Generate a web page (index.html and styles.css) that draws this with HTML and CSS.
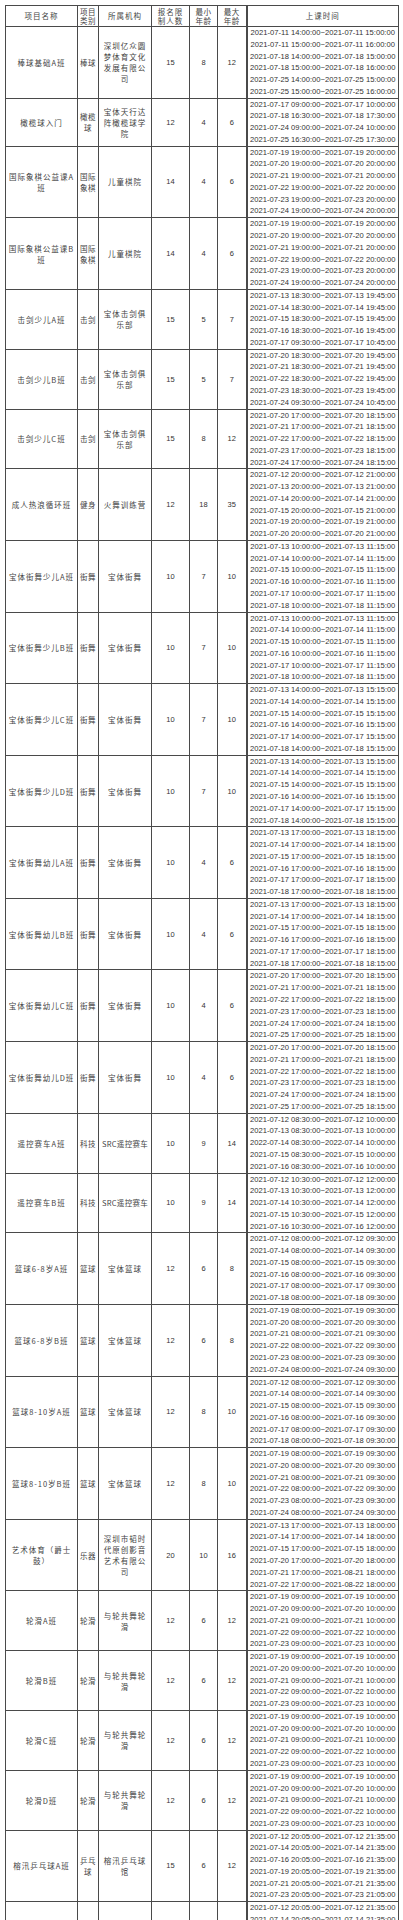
FILE: index.html
```html
<!DOCTYPE html>
<html lang="zh-CN">
<head>
<meta charset="utf-8">
<title>课程表</title>
<link rel="stylesheet" href="styles.css">
</head>
<body>
<div class="wrap">
<table class="tbl">
<colgroup>
<col class="c1"><col class="c2"><col class="c3"><col class="c4"><col class="c5"><col class="c6"><col class="c7">
</colgroup>
<thead>
<tr><th>项目名称</th><th class="narrow">项目<br>类别</th><th>所属机构</th><th>报名限<br>制人数</th><th class="narrow">最小<br>年龄</th><th class="narrow">最大<br>年龄</th><th class="t">上课时间</th></tr>
</thead>
<tbody>
<tr><td class="nm">棒球基础A班</td><td class="nm cat">棒球</td><td class="nm">深圳亿众圆<br>梦体育文化<br>发展有限公<br>司</td><td class="n">15</td><td class="n">8</td><td class="n">12</td><td class="t">
<div>2021-07-11 14:00:00~2021-07-11 15:00:00</div>
<div>2021-07-11 15:00:00~2021-07-11 16:00:00</div>
<div>2021-07-18 14:00:00~2021-07-18 15:00:00</div>
<div>2021-07-18 15:00:00~2021-07-18 16:00:00</div>
<div>2021-07-25 14:00:00~2021-07-25 15:00:00</div>
<div>2021-07-25 15:00:00~2021-07-25 16:00:00</div>
</td></tr>
<tr><td class="nm">橄榄球入门</td><td class="nm cat">橄榄<br>球</td><td class="nm">宝体天行达<br>阵橄榄球学<br>院</td><td class="n">12</td><td class="n">4</td><td class="n">6</td><td class="t">
<div>2021-07-17 09:00:00~2021-07-17 10:00:00</div>
<div>2021-07-18 16:30:00~2021-07-18 17:30:00</div>
<div>2021-07-24 09:00:00~2021-07-24 10:00:00</div>
<div>2021-07-25 16:30:00~2021-07-25 17:30:00</div>
</td></tr>
<tr><td class="nm">国际象棋公益课A<br>班</td><td class="nm cat">国际<br>象棋</td><td class="nm">儿童棋院</td><td class="n">14</td><td class="n">4</td><td class="n">6</td><td class="t">
<div>2021-07-19 19:00:00~2021-07-19 20:00:00</div>
<div>2021-07-20 19:00:00~2021-07-20 20:00:00</div>
<div>2021-07-21 19:00:00~2021-07-21 20:00:00</div>
<div>2021-07-22 19:00:00~2021-07-22 20:00:00</div>
<div>2021-07-23 19:00:00~2021-07-23 20:00:00</div>
<div>2021-07-24 19:00:00~2021-07-24 20:00:00</div>
</td></tr>
<tr><td class="nm">国际象棋公益课B<br>班</td><td class="nm cat">国际<br>象棋</td><td class="nm">儿童棋院</td><td class="n">14</td><td class="n">4</td><td class="n">6</td><td class="t">
<div>2021-07-19 19:00:00~2021-07-19 20:00:00</div>
<div>2021-07-20 19:00:00~2021-07-20 20:00:00</div>
<div>2021-07-21 19:00:00~2021-07-21 20:00:00</div>
<div>2021-07-22 19:00:00~2021-07-22 20:00:00</div>
<div>2021-07-23 19:00:00~2021-07-23 20:00:00</div>
<div>2021-07-24 19:00:00~2021-07-24 20:00:00</div>
</td></tr>
<tr><td class="nm">击剑少儿A班</td><td class="nm cat">击剑</td><td class="nm">宝体击剑俱<br>乐部</td><td class="n">15</td><td class="n">5</td><td class="n">7</td><td class="t">
<div>2021-07-13 18:30:00~2021-07-13 19:45:00</div>
<div>2021-07-14 18:30:00~2021-07-14 19:45:00</div>
<div>2021-07-15 18:30:00~2021-07-15 19:45:00</div>
<div>2021-07-16 18:30:00~2021-07-16 19:45:00</div>
<div>2021-07-17 09:30:00~2021-07-17 10:45:00</div>
</td></tr>
<tr><td class="nm">击剑少儿B班</td><td class="nm cat">击剑</td><td class="nm">宝体击剑俱<br>乐部</td><td class="n">15</td><td class="n">5</td><td class="n">7</td><td class="t">
<div>2021-07-20 18:30:00~2021-07-20 19:45:00</div>
<div>2021-07-21 18:30:00~2021-07-21 19:45:00</div>
<div>2021-07-22 18:30:00~2021-07-22 19:45:00</div>
<div>2021-07-23 18:30:00~2021-07-23 19:45:00</div>
<div>2021-07-24 09:30:00~2021-07-24 10:45:00</div>
</td></tr>
<tr><td class="nm">击剑少儿C班</td><td class="nm cat">击剑</td><td class="nm">宝体击剑俱<br>乐部</td><td class="n">15</td><td class="n">8</td><td class="n">12</td><td class="t">
<div>2021-07-20 17:00:00~2021-07-20 18:15:00</div>
<div>2021-07-21 17:00:00~2021-07-21 18:15:00</div>
<div>2021-07-22 17:00:00~2021-07-22 18:15:00</div>
<div>2021-07-23 17:00:00~2021-07-23 18:15:00</div>
<div>2021-07-24 17:00:00~2021-07-24 18:15:00</div>
</td></tr>
<tr><td class="nm">成人热浪循环班</td><td class="nm cat">健身</td><td class="nm">火舞训练营</td><td class="n">12</td><td class="n">18</td><td class="n">35</td><td class="t">
<div>2021-07-12 20:00:00~2021-07-12 21:00:00</div>
<div>2021-07-13 20:00:00~2021-07-13 21:00:00</div>
<div>2021-07-14 20:00:00~2021-07-14 21:00:00</div>
<div>2021-07-15 20:00:00~2021-07-15 21:00:00</div>
<div>2021-07-19 20:00:00~2021-07-19 21:00:00</div>
<div>2021-07-20 20:00:00~2021-07-20 21:00:00</div>
</td></tr>
<tr><td class="nm">宝体街舞少儿A班</td><td class="nm cat">街舞</td><td class="nm">宝体街舞</td><td class="n">10</td><td class="n">7</td><td class="n">10</td><td class="t">
<div>2021-07-13 10:00:00~2021-07-13 11:15:00</div>
<div>2021-07-14 10:00:00~2021-07-14 11:15:00</div>
<div>2021-07-15 10:00:00~2021-07-15 11:15:00</div>
<div>2021-07-16 10:00:00~2021-07-16 11:15:00</div>
<div>2021-07-17 10:00:00~2021-07-17 11:15:00</div>
<div>2021-07-18 10:00:00~2021-07-18 11:15:00</div>
</td></tr>
<tr><td class="nm">宝体街舞少儿B班</td><td class="nm cat">街舞</td><td class="nm">宝体街舞</td><td class="n">10</td><td class="n">7</td><td class="n">10</td><td class="t">
<div>2021-07-13 10:00:00~2021-07-13 11:15:00</div>
<div>2021-07-14 10:00:00~2021-07-14 11:15:00</div>
<div>2021-07-15 10:00:00~2021-07-15 11:15:00</div>
<div>2021-07-16 10:00:00~2021-07-16 11:15:00</div>
<div>2021-07-17 10:00:00~2021-07-17 11:15:00</div>
<div>2021-07-18 10:00:00~2021-07-18 11:15:00</div>
</td></tr>
<tr><td class="nm">宝体街舞少儿C班</td><td class="nm cat">街舞</td><td class="nm">宝体街舞</td><td class="n">10</td><td class="n">7</td><td class="n">10</td><td class="t">
<div>2021-07-13 14:00:00~2021-07-13 15:15:00</div>
<div>2021-07-14 14:00:00~2021-07-14 15:15:00</div>
<div>2021-07-15 14:00:00~2021-07-15 15:15:00</div>
<div>2021-07-16 14:00:00~2021-07-16 15:15:00</div>
<div>2021-07-17 14:00:00~2021-07-17 15:15:00</div>
<div>2021-07-18 14:00:00~2021-07-18 15:15:00</div>
</td></tr>
<tr><td class="nm">宝体街舞少儿D班</td><td class="nm cat">街舞</td><td class="nm">宝体街舞</td><td class="n">10</td><td class="n">7</td><td class="n">10</td><td class="t">
<div>2021-07-13 14:00:00~2021-07-13 15:15:00</div>
<div>2021-07-14 14:00:00~2021-07-14 15:15:00</div>
<div>2021-07-15 14:00:00~2021-07-15 15:15:00</div>
<div>2021-07-16 14:00:00~2021-07-16 15:15:00</div>
<div>2021-07-17 14:00:00~2021-07-17 15:15:00</div>
<div>2021-07-18 14:00:00~2021-07-18 15:15:00</div>
</td></tr>
<tr><td class="nm">宝体街舞幼儿A班</td><td class="nm cat">街舞</td><td class="nm">宝体街舞</td><td class="n">10</td><td class="n">4</td><td class="n">6</td><td class="t">
<div>2021-07-13 17:00:00~2021-07-13 18:15:00</div>
<div>2021-07-14 17:00:00~2021-07-14 18:15:00</div>
<div>2021-07-15 17:00:00~2021-07-15 18:15:00</div>
<div>2021-07-16 17:00:00~2021-07-16 18:15:00</div>
<div>2021-07-17 17:00:00~2021-07-17 18:15:00</div>
<div>2021-07-18 17:00:00~2021-07-18 18:15:00</div>
</td></tr>
<tr><td class="nm">宝体街舞幼儿B班</td><td class="nm cat">街舞</td><td class="nm">宝体街舞</td><td class="n">10</td><td class="n">4</td><td class="n">6</td><td class="t">
<div>2021-07-13 17:00:00~2021-07-13 18:15:00</div>
<div>2021-07-14 17:00:00~2021-07-14 18:15:00</div>
<div>2021-07-15 17:00:00~2021-07-15 18:15:00</div>
<div>2021-07-16 17:00:00~2021-07-16 18:15:00</div>
<div>2021-07-17 17:00:00~2021-07-17 18:15:00</div>
<div>2021-07-18 17:00:00~2021-07-18 18:15:00</div>
</td></tr>
<tr><td class="nm">宝体街舞幼儿C班</td><td class="nm cat">街舞</td><td class="nm">宝体街舞</td><td class="n">10</td><td class="n">4</td><td class="n">6</td><td class="t">
<div>2021-07-20 17:00:00~2021-07-20 18:15:00</div>
<div>2021-07-21 17:00:00~2021-07-21 18:15:00</div>
<div>2021-07-22 17:00:00~2021-07-22 18:15:00</div>
<div>2021-07-23 17:00:00~2021-07-23 18:15:00</div>
<div>2021-07-24 17:00:00~2021-07-24 18:15:00</div>
<div>2021-07-25 17:00:00~2021-07-25 18:15:00</div>
</td></tr>
<tr><td class="nm">宝体街舞幼儿D班</td><td class="nm cat">街舞</td><td class="nm">宝体街舞</td><td class="n">10</td><td class="n">4</td><td class="n">6</td><td class="t">
<div>2021-07-20 17:00:00~2021-07-20 18:15:00</div>
<div>2021-07-21 17:00:00~2021-07-21 18:15:00</div>
<div>2021-07-22 17:00:00~2021-07-22 18:15:00</div>
<div>2021-07-23 17:00:00~2021-07-23 18:15:00</div>
<div>2021-07-24 17:00:00~2021-07-24 18:15:00</div>
<div>2021-07-25 17:00:00~2021-07-25 18:15:00</div>
</td></tr>
<tr><td class="nm">遥控赛车A班</td><td class="nm cat">科技</td><td class="nm src">SRC遥控赛车</td><td class="n">10</td><td class="n">9</td><td class="n">14</td><td class="t">
<div>2021-07-12 08:30:00~2021-07-12 10:00:00</div>
<div>2021-07-13 08:30:00~2021-07-13 10:00:00</div>
<div>2022-07-14 08:30:00~2022-07-14 10:00:00</div>
<div>2021-07-15 08:30:00~2021-07-15 10:00:00</div>
<div>2021-07-16 08:30:00~2021-07-16 10:00:00</div>
</td></tr>
<tr><td class="nm">遥控赛车B班</td><td class="nm cat">科技</td><td class="nm src">SRC遥控赛车</td><td class="n">10</td><td class="n">9</td><td class="n">14</td><td class="t">
<div>2021-07-12 10:30:00~2021-07-12 12:00:00</div>
<div>2021-07-13 10:30:00~2021-07-13 12:00:00</div>
<div>2021-07-14 10:30:00~2021-07-14 12:00:00</div>
<div>2021-07-15 10:30:00~2021-07-15 12:00:00</div>
<div>2021-07-16 10:30:00~2021-07-16 12:00:00</div>
</td></tr>
<tr><td class="nm">篮球6-8岁A班</td><td class="nm cat">篮球</td><td class="nm">宝体篮球</td><td class="n">12</td><td class="n">6</td><td class="n">8</td><td class="t">
<div>2021-07-12 08:00:00~2021-07-12 09:30:00</div>
<div>2021-07-14 08:00:00~2021-07-14 09:30:00</div>
<div>2021-07-15 08:00:00~2021-07-15 09:30:00</div>
<div>2021-07-16 08:00:00~2021-07-16 09:30:00</div>
<div>2021-07-17 08:00:00~2021-07-17 09:30:00</div>
<div>2021-07-18 08:00:00~2021-07-18 09:30:00</div>
</td></tr>
<tr><td class="nm">篮球6-8岁B班</td><td class="nm cat">篮球</td><td class="nm">宝体篮球</td><td class="n">12</td><td class="n">6</td><td class="n">8</td><td class="t">
<div>2021-07-19 08:00:00~2021-07-19 09:30:00</div>
<div>2021-07-20 08:00:00~2021-07-20 09:30:00</div>
<div>2021-07-21 08:00:00~2021-07-21 09:30:00</div>
<div>2021-07-22 08:00:00~2021-07-22 09:30:00</div>
<div>2021-07-23 08:00:00~2021-07-23 09:30:00</div>
<div>2021-07-24 08:00:00~2021-07-24 09:30:00</div>
</td></tr>
<tr><td class="nm">篮球8-10岁A班</td><td class="nm cat">篮球</td><td class="nm">宝体篮球</td><td class="n">12</td><td class="n">8</td><td class="n">10</td><td class="t">
<div>2021-07-12 08:00:00~2021-07-12 09:30:00</div>
<div>2021-07-14 08:00:00~2021-07-14 09:30:00</div>
<div>2021-07-15 08:00:00~2021-07-15 09:30:00</div>
<div>2021-07-16 08:00:00~2021-07-16 09:30:00</div>
<div>2021-07-17 08:00:00~2021-07-17 09:30:00</div>
<div>2021-07-18 08:00:00~2021-07-18 09:30:00</div>
</td></tr>
<tr><td class="nm">篮球8-10岁B班</td><td class="nm cat">篮球</td><td class="nm">宝体篮球</td><td class="n">12</td><td class="n">8</td><td class="n">10</td><td class="t">
<div>2021-07-19 08:00:00~2021-07-19 09:30:00</div>
<div>2021-07-20 08:00:00~2021-07-20 09:30:00</div>
<div>2021-07-21 08:00:00~2021-07-21 09:30:00</div>
<div>2021-07-22 08:00:00~2021-07-22 09:30:00</div>
<div>2021-07-23 08:00:00~2021-07-23 09:30:00</div>
<div>2021-07-24 08:00:00~2021-07-24 09:30:00</div>
</td></tr>
<tr><td class="nm">艺术体育（爵士<br>鼓）</td><td class="nm cat">乐器</td><td class="nm">深圳市韬时<br>代原创影音<br>艺术有限公<br>司</td><td class="n">20</td><td class="n">10</td><td class="n">16</td><td class="t">
<div>2021-07-13 17:00:00~2021-07-13 18:00:00</div>
<div>2021-07-14 17:00:00~2021-07-14 18:00:00</div>
<div>2021-07-15 17:00:00~2021-07-15 18:00:00</div>
<div>2021-07-20 17:00:00~2021-07-20 18:00:00</div>
<div>2021-07-21 17:00:00~2021-08-21 18:00:00</div>
<div>2021-07-22 17:00:00~2021-08-22 18:00:00</div>
</td></tr>
<tr><td class="nm">轮滑A班</td><td class="nm cat">轮滑</td><td class="nm">与轮共舞轮<br>滑</td><td class="n">12</td><td class="n">6</td><td class="n">12</td><td class="t">
<div>2021-07-19 09:00:00~2021-07-19 10:00:00</div>
<div>2021-07-20 09:00:00~2021-07-20 10:00:00</div>
<div>2021-07-21 09:00:00~2021-07-21 10:00:00</div>
<div>2021-07-22 09:00:00~2021-07-22 10:00:00</div>
<div>2021-07-23 09:00:00~2021-07-23 10:00:00</div>
</td></tr>
<tr><td class="nm">轮滑B班</td><td class="nm cat">轮滑</td><td class="nm">与轮共舞轮<br>滑</td><td class="n">12</td><td class="n">6</td><td class="n">12</td><td class="t">
<div>2021-07-19 09:00:00~2021-07-19 10:00:00</div>
<div>2021-07-20 09:00:00~2021-07-20 10:00:00</div>
<div>2021-07-21 09:00:00~2021-07-21 10:00:00</div>
<div>2021-07-22 09:00:00~2021-07-22 10:00:00</div>
<div>2021-07-23 09:00:00~2021-07-23 10:00:00</div>
</td></tr>
<tr><td class="nm">轮滑C班</td><td class="nm cat">轮滑</td><td class="nm">与轮共舞轮<br>滑</td><td class="n">12</td><td class="n">6</td><td class="n">12</td><td class="t">
<div>2021-07-19 09:00:00~2021-07-19 10:00:00</div>
<div>2021-07-20 09:00:00~2021-07-20 10:00:00</div>
<div>2021-07-21 09:00:00~2021-07-21 10:00:00</div>
<div>2021-07-22 09:00:00~2021-07-22 10:00:00</div>
<div>2021-07-23 09:00:00~2021-07-23 10:00:00</div>
</td></tr>
<tr><td class="nm">轮滑D班</td><td class="nm cat">轮滑</td><td class="nm">与轮共舞轮<br>滑</td><td class="n">12</td><td class="n">6</td><td class="n">12</td><td class="t">
<div>2021-07-19 09:00:00~2021-07-19 10:00:00</div>
<div>2021-07-20 09:00:00~2021-07-20 10:00:00</div>
<div>2021-07-21 09:00:00~2021-07-21 10:00:00</div>
<div>2021-07-22 09:00:00~2021-07-22 10:00:00</div>
<div>2021-07-23 09:00:00~2021-07-23 10:00:00</div>
</td></tr>
<tr><td class="nm">榕汛乒乓球A班</td><td class="nm cat">乒乓<br>球</td><td class="nm">榕汛乒乓球<br>馆</td><td class="n">15</td><td class="n">6</td><td class="n">12</td><td class="t">
<div>2021-07-12 20:05:00~2021-07-12 21:35:00</div>
<div>2021-07-14 20:05:00~2021-07-14 21:35:00</div>
<div>2021-07-16 20:05:00~2021-07-16 21:35:00</div>
<div>2021-07-19 20:05:00~2021-07-19 21:35:00</div>
<div>2021-07-21 20:05:00~2021-07-21 21:35:00</div>
<div>2021-07-23 20:05:00~2021-07-23 21:05:00</div>
</td></tr>
<tr><td class="nm">榕汛乒乓球B班</td><td class="nm cat">乒乓<br>球</td><td class="nm">榕汛乒乓球<br>馆</td><td class="n">15</td><td class="n">6</td><td class="n">12</td><td class="t">
<div>2021-07-12 20:05:00~2021-07-12 21:35:00</div>
<div>2021-07-14 20:05:00~2021-07-14 21:35:00</div>
<div>2021-07-16 20:05:00~2021-07-16 21:35:00</div>
<div>2021-07-19 20:05:00~2021-07-19 21:35:00</div>
<div>2021-07-21 20:05:00~2021-07-21 21:35:00</div>
<div>2021-07-23 20:05:00~2021-07-23 21:35:00</div>
</td></tr>
</tbody>
</table>
</div>
</body>
</html>
```

FILE: styles.css
```css
html, body {
  margin: 0;
  padding: 0;
  background: #ffffff;
}

.wrap {
  padding: 5px 0 0 5px;
}

.tbl {
  border-collapse: collapse;
  table-layout: fixed;
  width: 393px;
  font-family: "Noto Sans CJK SC", "Noto Sans", sans-serif;
  color: #444444;
}

.c1 { width: 72px; }
.c2 { width: 21px; }
.c3 { width: 53px; }
.c4 { width: 38px; }
.c5 { width: 28px; }
.c6 { width: 29px; }
.c7 { width: 152px; }

.tbl th,
.tbl td {
  border: 1px solid #4a4a4a;
  padding: 0;
  text-align: center;
  vertical-align: middle;
  font-weight: 400;
}

.tbl th {
  height: 20px;
  font-size: 7.5px;
  line-height: 9.5px;
  letter-spacing: 1px;
}

.tbl th.narrow {
  letter-spacing: 0.4px;
}

.tbl .t {
  border-left: 2px solid #4a4a4a;
}

.nm {
  font-size: 7.5px;
  line-height: 11px;
  letter-spacing: 1px;
}

.cat {
  letter-spacing: 0.4px;
}

.src {
  letter-spacing: 0.3px;
  white-space: nowrap;
}

.n {
  font-family: "Liberation Sans", Arial, sans-serif;
  font-size: 7.5px;
  color: #333333;
}

.t div {
  font-family: "Liberation Sans", Arial, sans-serif;
  font-size: 7.6px;
  line-height: 11.77px;
  height: 11.77px;
  white-space: nowrap;
  color: #333333;
}
```
